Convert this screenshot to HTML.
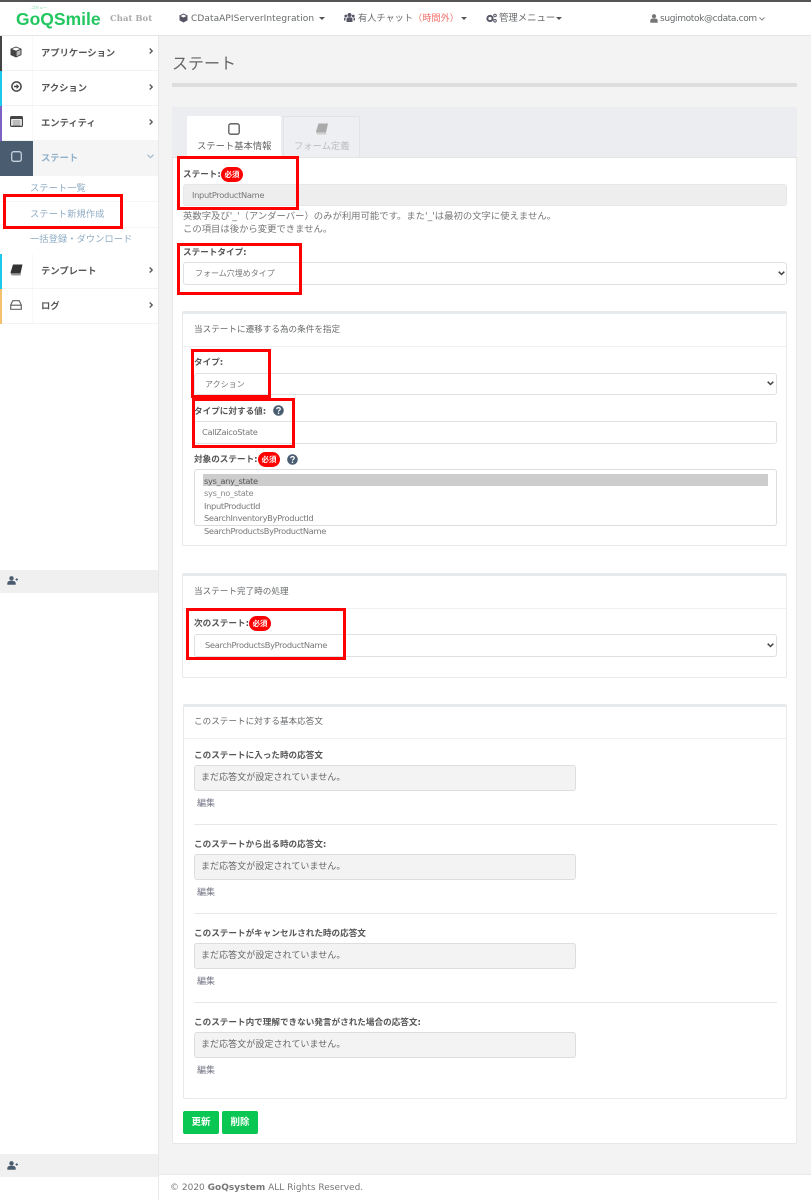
<!DOCTYPE html>
<html lang="ja"><head><meta charset="utf-8"><title>ステート</title>
<style>
*{box-sizing:border-box}
html,body{margin:0;padding:0}
body{width:811px;height:1200px;position:relative;overflow:hidden;background:#f3f3f4;font-family:"DejaVu Sans","Noto Sans CJK JP",sans-serif;font-size:9px;color:#676a6c}
.a{position:absolute}
.t{position:absolute;white-space:nowrap;line-height:12px;height:12px;margin-top:1px}
.b{font-weight:bold;color:#555;font-size:8.6px}
.r{font-weight:bold;color:#555;font-size:8.6px}
.h{font-size:8.6px}
.o{font-size:8.3px;letter-spacing:-.33px;color:#777}
.bar{position:absolute;left:0;width:2px}
.nav{position:absolute;left:0;width:158px;height:35px;border-bottom:1px solid #f3f3f3}
.nav i{position:absolute;left:32px;top:0;bottom:0;width:1px;background:#f8f8f8}
.nl{position:absolute;left:41px;top:11px;font-size:9.300px;font-weight:bold;color:#555;white-space:nowrap;line-height:13px}
.input{position:absolute;border:1px solid #e0e0e0;border-radius:3px;background:#fff;font-size:8.3px;letter-spacing:-.33px;color:#777;line-height:21px;white-space:nowrap}
.ro{background:#eee;border-color:#e7e7e7;line-height:21px}
.sec{position:absolute;background:#fff;border:1px solid #e9e9e9;border-top:3px solid #e7eaec;border-radius:2px}
.sep{position:absolute;height:1px;background:#f0f0f0}
.red{position:absolute;border:3px solid #f00;z-index:5}
.req{position:absolute;background:#f00;color:#fff;border-radius:8px;font-size:7.5px;font-weight:bold;width:22px;height:15px;line-height:15px;text-align:center}
.resp{position:absolute;left:194px;width:382px;height:26px;background:#f3f3f3;border:1px solid #ddd;border-radius:3px;font-size:9px;color:#666;line-height:25px;padding-left:6px;letter-spacing:.06px}
.btn{position:absolute;top:1111px;height:23px;width:36px;background:#0ac653;color:#fff;border-radius:2px;font-weight:bold;font-size:9.5px;line-height:23px;text-align:center}
svg{position:absolute;overflow:visible}
</style></head><body>

<!-- top bar -->
<div class="a" style="left:0;top:0;width:811px;height:36px;background:#fff;border-bottom:1px solid #e5e5e5"></div>
<div class="a" style="left:0;top:0;width:811px;height:2px;background:#555"></div>
<div class="t" style="left:16px;top:9px;height:18px;line-height:18px;font-family:'Liberation Sans',sans-serif;font-size:17.500px;font-weight:bold;color:#22c760">GoQSmile</div>
<div class="t" style="left:31px;top:4px;height:6px;line-height:6px;font-size:4px;color:#7ad69b">ゴキュー</div>
<div class="t" style="left:110px;top:12px;font-family:'DejaVu Serif','Liberation Serif',serif;font-size:8.500px;font-weight:bold;color:#aaa">Chat Bot</div>

<svg style="left:179px;top:13px" width="9" height="10" viewBox="0 0 9 10"><path d="M4.5.5 8.5 2.4V7.4L4.5 9.5.5 7.4V2.4Z" fill="#556"/><path d="M1.5 3 4.500 4.500 7.500 3 4.500 1.600Z" fill="#fff"/></svg>
<div class="t" style="left:191px;top:12px;letter-spacing:.08px">CDataAPIServerIntegration</div>
<svg style="left:319px;top:17px" width="6" height="3"><path d="M0 0H6L3 3Z" fill="#555"/></svg>
<svg style="left:344px;top:13px" width="11" height="10" viewBox="0 0 11 10"><circle cx="5.500" cy="2" r="2" fill="#556"/><circle cx="1.800" cy="3" r="1.400" fill="#556"/><circle cx="9.200" cy="3" r="1.400" fill="#556"/><path d="M2.500 9V6q0-1.700 3-1.700t3 1.700V9ZM0 7.500V5.500q0-1 1.500-1V7.500ZM11 7.500V5.500q0-1-1.500-1V7.500Z" fill="#556"/></svg>
<div class="t" style="left:358px;top:12px;font-size:9.200px">有人チャット<span style="color:#f0706a">（時間外）</span></div>
<svg style="left:461px;top:17px" width="6" height="3"><path d="M0 0H6L3 3Z" fill="#555"/></svg>
<svg style="left:486px;top:13px" width="11" height="10" viewBox="0 0 11 10"><circle cx="4" cy="5.500" r="2.600" fill="none" stroke="#556" stroke-width="2"/><circle cx="9" cy="2.500" r="1.300" fill="none" stroke="#556"/><circle cx="9" cy="7.800" r="1.300" fill="none" stroke="#556"/></svg>
<div class="t" style="left:499px;top:12px;font-size:9.400px">管理メニュー</div>
<svg style="left:556px;top:17px" width="6" height="3"><path d="M0 0H6L3 3Z" fill="#555"/></svg>
<svg style="left:650px;top:14px" width="8" height="9" viewBox="0 0 8 9"><circle cx="4" cy="2.200" r="2.100" fill="#777"/><path d="M.3 8.800V6.500Q.3 4.800 2.500 4.500H5.500Q7.700 4.800 7.700 6.500V8.800Z" fill="#777"/></svg>
<div class="t" style="left:660px;top:12px;letter-spacing:-.35px">sugimotok@cdata.com</div>
<svg style="left:759px;top:17px" width="6" height="4"><path d="M.5.500 3 3 5.500.500" fill="none" stroke="#888"/></svg>

<!-- sidebar -->
<div class="a" style="left:0;top:36px;width:159px;height:1164px;background:#fff;border-right:1px solid #e8e8e8"></div>

<div class="nav" style="top:36px"><i></i><span class="nl">アプリケーション</span></div>
<div class="nav" style="top:71px"><i></i><span class="nl">アクション</span></div>
<div class="nav" style="top:106px"><i></i><span class="nl">エンティティ</span></div>
<div class="a" style="left:33px;top:141px;width:125px;height:35px;background:#f5f5f5"></div>
<div class="a" style="left:0;top:141px;width:33px;height:35px;background:#4a5d70"></div>
<div class="t" style="left:41px;top:151px;height:13px;line-height:13px;font-size:9.300px;font-weight:bold;color:#8fb0ca">ステート</div>
<div class="nav" style="top:254px"><i></i><span class="nl">テンプレート</span></div>
<div class="nav" style="top:289px"><i></i><span class="nl">ログ</span></div>

<div class="bar" style="top:36px;height:35px;background:#444"></div>
<div class="bar" style="top:71px;height:35px;background:#1cc8ec"></div>
<div class="bar" style="top:106px;height:35px;background:#7d62c4"></div>
<div class="bar" style="top:254px;height:35px;background:#1cc8ec"></div>
<div class="bar" style="top:289px;height:35px;background:#f6c16f"></div>

<svg style="left:10px;top:46px" width="12" height="12" viewBox="0 0 12 12"><path d="M6 .5 11.500 2.800V9L6 11.500.5 9V2.800Z" fill="#444"/><path d="M2 3 6 4.800 10 3 6 1.500Z" fill="#fff"/><path d="M6.600 5.600 10.500 3.900V8.400L6.600 10.200Z" fill="#bbb"/></svg>
<svg style="left:11px;top:81px" width="11" height="11" viewBox="0 0 11 11"><circle cx="5.500" cy="5.500" r="4.600" fill="none" stroke="#444" stroke-width="1.500"/><path d="M3 4.800H5.500V3L8.200 5.500 5.500 8V6.200H3Z" fill="#444"/></svg>
<svg style="left:10px;top:116px" width="13" height="11" viewBox="0 0 13 11"><rect x=".6" y=".6" width="11.800" height="9.800" rx="1" fill="#fff" stroke="#444" stroke-width="1.200"/><rect x=".6" y=".6" width="11.800" height="2.500" fill="#444"/><path d="M2.500 5H10.500M2.500 7H10.500M2.500 9H10.500" stroke="#777" stroke-width=".9"/></svg>
<svg style="left:11px;top:151px" width="11" height="11" viewBox="0 0 11 11"><rect x=".7" y=".7" width="9.600" height="9.600" rx="2" fill="none" stroke="#c5d2de" stroke-width="1.300"/></svg>
<svg style="left:10px;top:264px" width="13" height="12" viewBox="0 0 13 12"><path d="M3 .5H12.500L10.500 9.500H1.500Q.3 9.500.7 8Z" fill="#333"/><path d="M1 9.500Q.8 11.500 2.500 11.500H10.500L11 9.700 2 9.700" fill="#999"/></svg>
<svg style="left:10px;top:300px" width="12" height="10" viewBox="0 0 12 10"><path d="M2.800.7H9.200L11.300 5V9.300H.7V5Z" fill="#fff" stroke="#666" stroke-width="1.200"/><path d="M.7 5.200H11.300" stroke="#666" stroke-width="1.200"/></svg>

<svg style="left:149px;top:48px" width="4" height="6"><path d="M.7.500 3.200 3 .7 5.500" fill="none" stroke="#555" stroke-width="1.300"/></svg>
<svg style="left:149px;top:84px" width="4" height="6"><path d="M.7.500 3.200 3 .7 5.500" fill="none" stroke="#555" stroke-width="1.300"/></svg>
<svg style="left:149px;top:119px" width="4" height="6"><path d="M.7.500 3.200 3 .7 5.500" fill="none" stroke="#555" stroke-width="1.300"/></svg>
<svg style="left:147px;top:154px" width="7" height="5"><path d="M.5.700 3.500 3.700 6.500.700" fill="none" stroke="#a4bccd" stroke-width="1.200"/></svg>
<svg style="left:149px;top:267px" width="4" height="6"><path d="M.7.500 3.200 3 .7 5.500" fill="none" stroke="#555" stroke-width="1.300"/></svg>
<svg style="left:149px;top:302px" width="4" height="6"><path d="M.7.500 3.200 3 .7 5.500" fill="none" stroke="#555" stroke-width="1.300"/></svg>

<div class="t" style="left:30px;top:182px;font-size:9.300px;color:#92aec5">ステート一覧</div>
<div class="a" style="left:0;top:201px;width:158px;height:1px;background:#f5f5f5"></div>
<div class="t" style="left:30px;top:208px;font-size:9.300px;color:#92aec5">ステート新規作成</div>
<div class="a" style="left:0;top:227px;width:158px;height:1px;background:#f5f5f5"></div>
<div class="t" style="left:30px;top:233px;font-size:9.300px;color:#92aec5">一括登録・ダウンロード</div>
<div class="red" style="left:3px;top:194px;width:120px;height:35px"></div>

<div class="a" style="left:0;top:570px;width:158px;height:23px;background:#f0f0f0"></div>
<div class="a" style="left:0;top:1154px;width:158px;height:23px;background:#f0f0f0"></div>
<svg style="left:7px;top:576px" width="11" height="9" viewBox="0 0 11 9"><circle cx="4.500" cy="2.300" r="2.200" fill="#4a5d70"/><path d="M.3 8.800V7Q.5 5 3.500 4.800H5.500Q8.500 5 8.700 7V8.800Z" fill="#4a5d70"/><path d="M8.500 3.500H11M9.750 2.300V4.700" stroke="#4a5d70"/></svg>
<svg style="left:7px;top:1161px" width="11" height="9" viewBox="0 0 11 9"><circle cx="4.500" cy="2.300" r="2.200" fill="#4a5d70"/><path d="M.3 8.800V7Q.5 5 3.500 4.800H5.500Q8.500 5 8.700 7V8.800Z" fill="#4a5d70"/><path d="M8.500 3.500H11M9.750 2.300V4.700" stroke="#4a5d70"/></svg>

<!-- heading -->
<div class="t" style="left:172px;top:52px;height:22px;line-height:22px;font-size:16px;color:#666">ステート</div>
<div class="a" style="left:172px;top:83px;width:625px;height:4px;background:#dedede"></div>

<!-- main panel -->
<div class="a" style="left:172px;top:107px;width:625px;height:1037px;background:#fff;border:1px solid #e8e8e8;border-radius:2px"></div>
<div class="a" style="left:172px;top:107px;width:625px;height:51px;background:#ecedf1;border-bottom:1px solid #e3e3e3;border-radius:2px 2px 0 0"></div>
<div class="a" style="left:187px;top:116px;width:94px;height:42px;background:#fff;border-radius:2px 2px 0 0"></div>
<div class="a" style="left:283px;top:116px;width:77px;height:41px;background:#eeeff2;border:1px solid #e3e3e3;border-bottom:0"></div>
<svg style="left:228px;top:123px" width="12" height="12" viewBox="0 0 12 12"><rect x=".8" y=".8" width="10.400" height="10.400" rx="2" fill="none" stroke="#555" stroke-width="1.300"/></svg>
<svg style="left:315px;top:123px" width="14" height="12" viewBox="0 0 14 12"><path d="M3.500.5H13L11 9.500H2Q.8 9.500 1.200 8Z" fill="#aaa"/><path d="M1.500 9.500Q1.300 11.500 3 11.500H11L11.500 9.700 2.500 9.700" fill="#ccc"/></svg>
<div class="t" style="left:197px;top:140px;font-size:9.300px;color:#666">ステート基本情報</div>
<div class="t" style="left:294px;top:140px;font-size:9.300px;color:#bbb">フォーム定義</div>

<!-- first block -->
<div class="t b" style="left:183px;top:168px">ステート:</div>
<div class="req" style="left:221px;top:167px">必須</div>
<div class="input ro" style="left:183px;top:184px;width:604px;height:22px;padding-left:8px">InputProductName</div>
<div class="t" style="left:183px;top:210px;font-size:9.350px;color:#777">英数字及び'_'（アンダーバー）のみが利用可能です。また'_'は最初の文字に使えません。</div>
<div class="t" style="left:183px;top:223px;font-size:9.350px;color:#777">この項目は後から変更できません。</div>
<div class="t b" style="left:183px;top:246px">ステートタイプ:</div>
<div class="input" style="left:183px;top:262px;width:604px;height:23px;padding-left:11px;letter-spacing:0;font-size:8px">フォーム穴埋めタイプ</div>
<svg style="left:778px;top:271px" width="7" height="5"><path d="M.7.700 3.500 3.500 6.300.700" fill="none" stroke="#444" stroke-width="1.500"/></svg>
<div class="red" style="left:177px;top:156px;width:122px;height:54px"></div>
<div class="red" style="left:177px;top:243px;width:125px;height:52px"></div>

<!-- section 1 -->
<div class="sec" style="left:182px;top:311px;width:605px;height:235px"></div>
<div class="t h" style="left:194px;top:323px">当ステートに遷移する為の条件を指定</div>
<div class="sep" style="left:183px;top:346px;width:603px"></div>
<div class="t b" style="left:194px;top:356px">タイプ:</div>
<div class="input" style="left:194px;top:373px;width:583px;height:22px;padding-left:10px;letter-spacing:0;font-size:8px">アクション</div>
<svg style="left:767px;top:381px" width="7" height="5"><path d="M.7.700 3.500 3.500 6.300.700" fill="none" stroke="#444" stroke-width="1.500"/></svg>
<div class="t b" style="left:194px;top:405px">タイプに対する値:</div>
<svg style="left:273px;top:405px" width="11" height="11" viewBox="0 0 11 11"><circle cx="5.500" cy="5.500" r="5.300" fill="#4a5d70"/><path d="M3.700 4.200Q3.800 2.600 5.500 2.600 7.300 2.700 7.300 4 7.300 4.900 6.200 5.500 5.500 5.900 5.500 6.600" fill="none" stroke="#fff" stroke-width="1.200"/><rect x="4.800" y="7.600" width="1.400" height="1.400" fill="#fff"/></svg>
<div class="input" style="left:194px;top:421px;width:583px;height:23px;padding-left:7px">CallZaicoState</div>
<div class="t b" style="left:194px;top:453px">対象のステート:</div>
<div class="req" style="left:258px;top:452px">必須</div>
<svg style="left:287px;top:454px" width="11" height="11" viewBox="0 0 11 11"><circle cx="5.500" cy="5.500" r="5.300" fill="#4a5d70"/><path d="M3.700 4.200Q3.800 2.600 5.500 2.600 7.300 2.700 7.300 4 7.300 4.900 6.200 5.500 5.500 5.900 5.500 6.600" fill="none" stroke="#fff" stroke-width="1.200"/><rect x="4.800" y="7.600" width="1.400" height="1.400" fill="#fff"/></svg>
<div class="a" style="left:194px;top:469px;width:583px;height:57px;background:#fff;border:1px solid #ddd;border-radius:3px"></div>
<div class="a" style="left:203px;top:474px;width:565px;height:12px;background:#cdcdcd"></div>
<div class="t o" style="left:204px;top:474px;color:#555">sys_any_state</div>
<div class="t o" style="left:204px;top:486px;color:#888">sys_no_state</div>
<div class="t o" style="left:204px;top:499px">InputProductId</div>
<div class="t o" style="left:204px;top:511px">SearchInventoryByProductId</div>
<div class="t o" style="left:204px;top:524px">SearchProductsByProductName</div>
<div class="red" style="left:191px;top:349px;width:80px;height:49px"></div>
<div class="red" style="left:192px;top:398px;width:103px;height:50px"></div>

<!-- section 2 -->
<div class="sec" style="left:182px;top:573px;width:605px;height:105px"></div>
<div class="t h" style="left:194px;top:585px">当ステート完了時の処理</div>
<div class="sep" style="left:183px;top:608px;width:603px"></div>
<div class="t b" style="left:194px;top:617px">次のステート:</div>
<div class="req" style="left:249px;top:616px">必須</div>
<div class="input" style="left:194px;top:634px;width:583px;height:23px;padding-left:10px">SearchProductsByProductName</div>
<svg style="left:767px;top:643px" width="7" height="5"><path d="M.7.700 3.500 3.500 6.300.700" fill="none" stroke="#444" stroke-width="1.500"/></svg>
<div class="red" style="left:186px;top:608px;width:160px;height:52px"></div>

<!-- section 3 -->
<div class="sec" style="left:183px;top:704px;width:604px;height:395px"></div>
<div class="t h" style="left:194px;top:715px">このステートに対する基本応答文</div>
<div class="sep" style="left:184px;top:738px;width:602px"></div>

<div class="t r" style="left:194px;top:749px">このステートに入った時の応答文</div>
<div class="resp" style="top:765px">まだ応答文が設定されていません。</div>
<div class="t" style="left:197px;top:797px;font-size:9px;color:#778">編集</div>
<div class="sep" style="left:194px;top:824px;width:583px;background:#e7e7e7"></div>

<div class="t r" style="left:194px;top:838px">このステートから出る時の応答文:</div>
<div class="resp" style="top:854px">まだ応答文が設定されていません。</div>
<div class="t" style="left:197px;top:886px;font-size:9px;color:#778">編集</div>
<div class="sep" style="left:194px;top:913px;width:583px;background:#e7e7e7"></div>

<div class="t r" style="left:194px;top:927px">このステートがキャンセルされた時の応答文</div>
<div class="resp" style="top:943px">まだ応答文が設定されていません。</div>
<div class="t" style="left:197px;top:975px;font-size:9px;color:#778">編集</div>
<div class="sep" style="left:194px;top:1002px;width:583px;background:#e7e7e7"></div>

<div class="t r" style="left:194px;top:1016px">このステート内で理解できない発言がされた場合の応答文:</div>
<div class="resp" style="top:1032px">まだ応答文が設定されていません。</div>
<div class="t" style="left:197px;top:1064px;font-size:9px;color:#778">編集</div>

<div class="btn" style="left:183px">更新</div>
<div class="btn" style="left:222px">削除</div>

<!-- footer -->
<div class="a" style="left:159px;top:1174px;width:652px;height:26px;background:#fff;border-top:1px solid #e7eaec"></div>
<div class="t" style="left:170px;top:1181px;font-size:9px;color:#777">© 2020 <b>GoQsystem</b> ALL Rights Reserved.</div>
</body></html>
